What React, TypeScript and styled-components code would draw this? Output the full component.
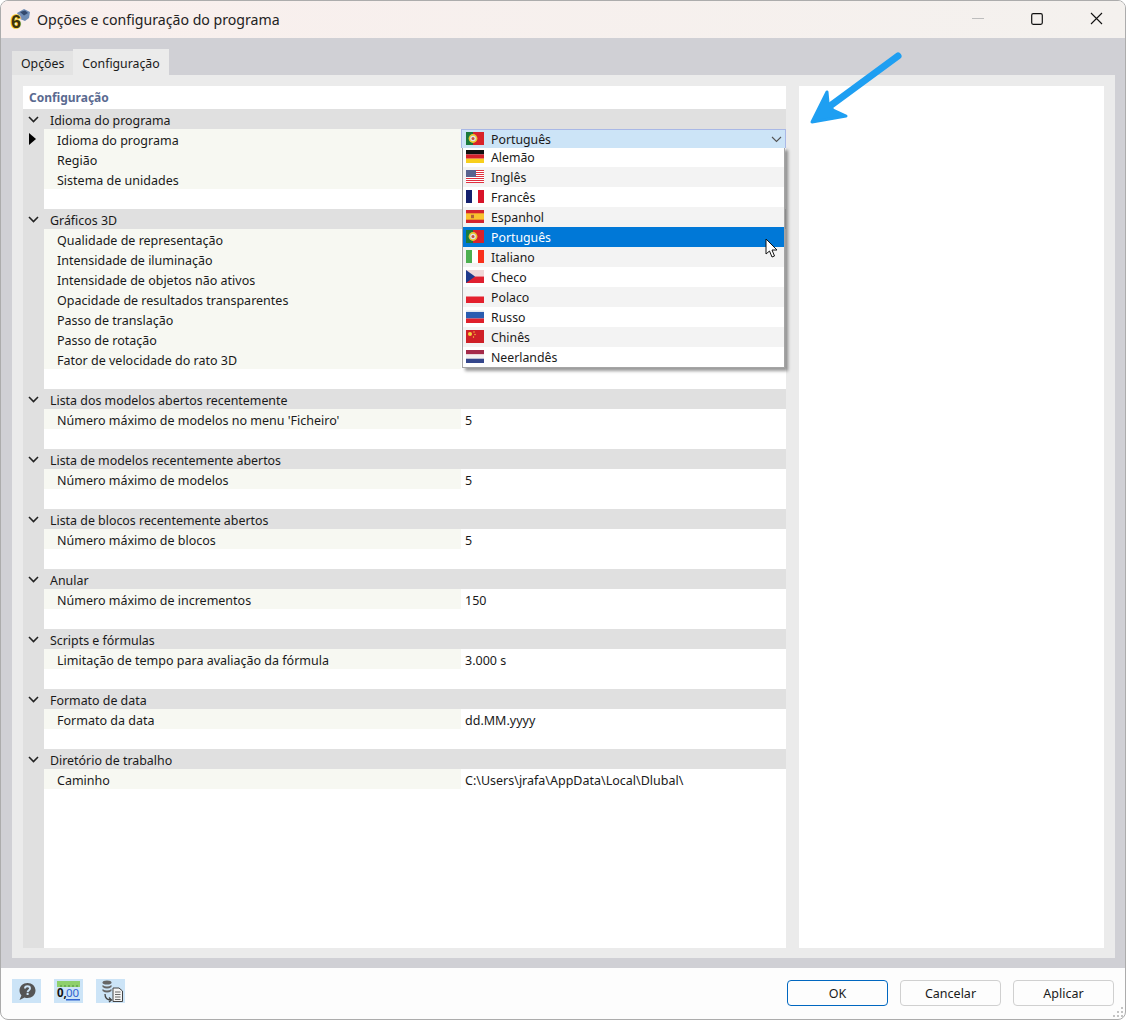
import styled, { createGlobalStyle } from "styled-components";
import { ReactNode } from "react";

const GlobalStyle = createGlobalStyle`
  html, body {
    margin: 0;
    padding: 0;
    background: #ffffff;
  }
  body {
    font-family: "Noto Sans", "Open Sans", sans-serif;
    font-size: 12px;
    color: #1a1a1a;
  }
  * {
    box-sizing: border-box;
  }
`;

const Screen = styled.div`
  width: 1127px;
  height: 1020px;
  position: relative;
  overflow: hidden;
`;

const Window = styled.div`
  width: 1126px;
  height: 1020px;
  border: 1px solid #acacac;
  border-radius: 8px;
  overflow: hidden;
  display: flex;
  flex-direction: column;
  background: #fdfdfd;
`;

const TitleBar = styled.div`
  height: 37px;
  flex-shrink: 0;
  display: flex;
  align-items: center;
  padding-left: 8px;
  background: linear-gradient(to right, #f9efed, #f4f1ee);
`;

const TitleText = styled.span`
  font-size: 14.15px;
  margin-left: 6px;
  color: #222;
`;

const WindowControls = styled.div`
  margin-left: auto;
  display: flex;
  align-items: center;
  gap: 47px;
  padding-right: 22px;
  padding-bottom: 2px;
`;

const Body = styled.div`
  flex: 1;
  min-height: 0;
  background: #d0d0d5;
  padding: 11px 10px 10px 11px;
  display: flex;
  flex-direction: column;
`;

const Tabs = styled.div`
  height: 26px;
  display: flex;
  align-items: flex-end;
  flex-shrink: 0;
`;

const Tab = styled.div<{ $active?: boolean }>`
  height: ${({ $active }) => ($active ? "26px" : "24px")};
  padding: ${({ $active }) => ($active ? "3px 9px 0" : "1px 9px 0")};
  display: flex;
  align-items: center;
  font-size: 12.3px;
  background: ${({ $active }) => ($active ? "#ebebeb" : "#e3e3e3")};
`;

const Panel = styled.div`
  flex: 1;
  min-height: 0;
  background: #ebebeb;
  padding: 11px 11px 10px;
  display: grid;
  grid-template-columns: 763px 305px;
  column-gap: 13px;
`;

const TreePane = styled.div`
  background: #fff;
  display: flex;
  flex-direction: column;
  position: relative;
`;

const PaneTitle = styled.div`
  height: 23px;
  padding-left: 6px;
  display: flex;
  align-items: center;
  font-weight: 700;
  font-size: 12px;
  color: #5a6a90;
`;

const Tree = styled.div`
  flex: 1;
  background: linear-gradient(to right, #e0e0e0 21px, #fff 21px);
`;

const GroupRow = styled.div`
  height: 20px;
  display: flex;
  align-items: center;
  background: #e0e0e0;
  font-size: 12.4px;
  padding-left: 5px;
`;

const GroupLabel = styled.span`
  margin-left: 11px;
  padding-top: 2px;
`;

const Row = styled.div`
  height: 20px;
  margin-left: 21px;
  display: grid;
  grid-template-columns: 417px 1fr;
  column-gap: 1px;
  position: relative;
`;

const RowLabel = styled.div`
  background: #f7f8f2;
  padding: 2px 0 0 13px;
  display: flex;
  align-items: center;
  font-size: 12.5px;
`;

const RowValue = styled.div`
  padding: 2px 0 0 3px;
  display: flex;
  align-items: center;
  font-size: 12.5px;
`;

const Spacer = styled.div`
  height: 20px;
`;

const RowMarker = styled.svg`
  position: absolute;
  left: -15px;
  top: 4px;
`;

const Combo = styled.div`
  position: absolute;
  left: 417px;
  top: 0;
  width: 325px;
  height: 19px;
  background: #cce4f7;
  border: 1px solid #a9b8e6;
  border-bottom: none;
  display: flex;
  align-items: center;
  padding-left: 4px;
  font-size: 12.3px;
  z-index: 3;
`;

const ComboChevron = styled.svg`
  margin-left: auto;
  margin-right: 3px;
`;

const FlagIcon = styled.svg`
  flex-shrink: 0;
  margin-bottom: 1px;
`;

const FlagLabel = styled.span`
  margin-left: 7px;
`;

const DropdownList = styled.div`
  position: absolute;
  left: 439px;
  top: 61px;
  width: 323px;
  border: 1px solid #a5a5a5;
  border-top: none;
  background: #fff;
  box-shadow: 3px 3px 3px rgba(0, 0, 0, 0.4);
  z-index: 2;
`;

const DropdownItem = styled.div<{ $selected: boolean; $odd: boolean }>`
  height: 20px;
  display: flex;
  align-items: center;
  padding-left: 3px;
  font-size: 12.3px;
  background: ${({ $selected, $odd }) =>
    $selected ? "#0078d7" : $odd ? "#f3f3f3" : "#fff"};
  color: ${({ $selected }) => ($selected ? "#fff" : "#1a1a1a")};
`;

const SidePane = styled.div`
  background: #fff;
`;

const Footer = styled.div`
  height: 51px;
  flex-shrink: 0;
  display: flex;
  padding: 11px 11px 0 11px;
`;

const ToolIcons = styled.div`
  display: flex;
  gap: 13px;
`;

const ToolIcon = styled.div`
  width: 29px;
  height: 24px;
  background: #cce4f7;
  display: flex;
  align-items: center;
  justify-content: center;
`;

const Buttons = styled.div`
  margin-left: auto;
  display: flex;
  gap: 12px;
  padding-top: 1px;
`;

const Button = styled.button<{ $primary?: boolean }>`
  width: 101px;
  height: 26px;
  background: #fdfdfd;
  border: 1px solid ${({ $primary }) => ($primary ? "#0067c0" : "#d0d0d0")};
  border-radius: 4px;
  font-family: inherit;
  font-size: 12.5px;
  color: #1a1a1a;
  padding: 0;
`;

const ResizeGrip = styled.svg`
  position: absolute;
  right: 3px;
  bottom: 2px;
`;

const Overlay = styled.svg`
  position: absolute;
  pointer-events: none;
  z-index: 5;
`;

const LogoIcon = styled.svg`
  flex-shrink: 0;
  overflow: visible;
  margin-bottom: 2px;
`;

type FlagCode =
  | "pt" | "de" | "en" | "fr" | "es" | "it" | "cz" | "pl" | "ru" | "cn" | "nl";

const flagArt: Record<FlagCode, ReactNode> = {
  pt: (
    <>
      <rect width="18" height="13" fill="#d8232a" />
      <rect width="7" height="13" fill="#1a7a3c" />
      <circle cx="7" cy="6.5" r="4.4" fill="#e8c832" />
      <circle cx="7" cy="6.5" r="2.8" fill="#dfe3ea" />
      <circle cx="7" cy="6.5" r="1.5" fill="#c8503c" />
    </>
  ),
  de: (
    <>
      <rect width="18" height="4.4" fill="#111" />
      <rect y="4.4" width="18" height="4.3" fill="#d5202b" />
      <rect y="8.7" width="18" height="4.3" fill="#f8cf1c" />
    </>
  ),
  en: (
    <>
      <rect width="18" height="13" fill="#fff" />
      {[0, 2, 4, 6, 8, 10, 12].map((y) => (
        <rect key={y} y={y} width="18" height="1" fill="#e0303f" />
      ))}
      <rect width="10" height="7" fill="#58628f" />
    </>
  ),
  fr: (
    <>
      <rect width="18" height="13" fill="#fff" />
      <rect width="6" height="13" fill="#14206e" />
      <rect x="12" width="6" height="13" fill="#d8142a" />
    </>
  ),
  es: (
    <>
      <rect width="18" height="13" fill="#d4232e" />
      <rect y="3.3" width="18" height="6.4" fill="#f9c22e" />
      <rect x="5" y="4.8" width="3" height="3.4" fill="#b0603c" />
    </>
  ),
  it: (
    <>
      <rect width="18" height="13" fill="#fff" />
      <rect width="6" height="13" fill="#4caf50" />
      <rect x="12" width="6" height="13" fill="#f9301c" />
    </>
  ),
  cz: (
    <>
      <rect width="18" height="6.5" fill="#f0d8d8" />
      <rect y="6.5" width="18" height="6.5" fill="#e02030" />
      <path d="M0 0 L9 6.5 L0 13 Z" fill="#1f3a8c" />
    </>
  ),
  pl: (
    <>
      <rect width="18" height="6.5" fill="#f4f4f4" />
      <rect y="6.5" width="18" height="6.5" fill="#e4202e" />
    </>
  ),
  ru: (
    <>
      <rect y="0.5" width="18" height="4" fill="#e4e8f0" />
      <rect y="2" width="18" height="6.5" fill="#2a5cb0" />
      <rect y="8.5" width="18" height="4.5" fill="#e0202c" />
    </>
  ),
  cn: (
    <>
      <rect width="18" height="13" fill="#cf1f27" />
      <circle cx="4" cy="4" r="2" fill="#f5d33c" />
      <circle cx="8" cy="2" r="0.7" fill="#f5d33c" />
      <circle cx="9" cy="4.5" r="0.7" fill="#f5d33c" />
      <circle cx="7.5" cy="7" r="0.7" fill="#f5d33c" />
    </>
  ),
  nl: (
    <>
      <rect width="18" height="4.4" fill="#a52a4a" />
      <rect y="4.4" width="18" height="4.3" fill="#f4f0f0" />
      <rect y="8.7" width="18" height="4.3" fill="#35478c" />
    </>
  ),
};

const Flag = ({ code }: { code: FlagCode }) => (
  <FlagIcon width="18" height="13" viewBox="0 0 18 13">
    {flagArt[code]}
  </FlagIcon>
);

const languages: { code: FlagCode; name: string }[] = [
  { code: "de", name: "Alemão" },
  { code: "en", name: "Inglês" },
  { code: "fr", name: "Francês" },
  { code: "es", name: "Espanhol" },
  { code: "pt", name: "Português" },
  { code: "it", name: "Italiano" },
  { code: "cz", name: "Checo" },
  { code: "pl", name: "Polaco" },
  { code: "ru", name: "Russo" },
  { code: "cn", name: "Chinês" },
  { code: "nl", name: "Neerlandês" },
];

const sections: { title: string; rows: [string, string?][] }[] = [
  {
    title: "Idioma do programa",
    rows: [["Idioma do programa"], ["Região"], ["Sistema de unidades"]],
  },
  {
    title: "Gráficos 3D",
    rows: [
      ["Qualidade de representação"],
      ["Intensidade de iluminação"],
      ["Intensidade de objetos não ativos"],
      ["Opacidade de resultados transparentes"],
      ["Passo de translação"],
      ["Passo de rotação"],
      ["Fator de velocidade do rato 3D"],
    ],
  },
  {
    title: "Lista dos modelos abertos recentemente",
    rows: [["Número máximo de modelos no menu 'Ficheiro'", "5"]],
  },
  {
    title: "Lista de modelos recentemente abertos",
    rows: [["Número máximo de modelos", "5"]],
  },
  {
    title: "Lista de blocos recentemente abertos",
    rows: [["Número máximo de blocos", "5"]],
  },
  { title: "Anular", rows: [["Número máximo de incrementos", "150"]] },
  {
    title: "Scripts e fórmulas",
    rows: [["Limitação de tempo para avaliação da fórmula", "3.000 s"]],
  },
  { title: "Formato de data", rows: [["Formato da data", "dd.MM.yyyy"]] },
  {
    title: "Diretório de trabalho",
    rows: [["Caminho", "C:\\Users\\jrafa\\AppData\\Local\\Dlubal\\"]],
  },
];

const Chevron = () => (
  <svg width="11" height="7" viewBox="0 0 11 7">
    <path d="M1 1 L5.5 5.5 L10 1" fill="none" stroke="#222" strokeWidth="1.6" />
  </svg>
);

const Logo = () => (
  <LogoIcon width="22" height="22" viewBox="0 0 22 22">
    <path d="M8 5 L15 1 L21 4 L20 10 L16 13 L11 11 Z" fill="#6f8db5" />
    <path d="M11 4 L16 2.5 L19 5 L15 7.5 Z" fill="#34496e" />
    <text
      x="2"
      y="19.5"
      fontSize="18"
      fontWeight="700"
      fill="#3a3210"
      stroke="#f2cc2a"
      strokeWidth="1.6"
      paintOrder="stroke"
      fontFamily="Liberation Sans, sans-serif"
    >
      6
    </text>
  </LogoIcon>
);

export default function App() {
  return (
    <Screen>
      <GlobalStyle />
      <Window>
        <TitleBar>
          <Logo />
          <TitleText>Opções e configuração do programa</TitleText>
          <WindowControls>
            <svg width="12" height="2" viewBox="0 0 12 2">
              <rect width="12" height="1" fill="#bdbdbd" />
            </svg>
            <svg width="12" height="12" viewBox="0 0 12 12">
              <rect x="0.7" y="0.7" width="10.6" height="10.6" rx="1.5" fill="none" stroke="#111" strokeWidth="1.2" />
            </svg>
            <svg width="13" height="13" viewBox="0 0 13 13">
              <path d="M1 1 L12 12 M12 1 L1 12" stroke="#111" strokeWidth="1.1" />
            </svg>
          </WindowControls>
        </TitleBar>

        <Body>
          <Tabs>
            <Tab>Opções</Tab>
            <Tab $active>Configuração</Tab>
          </Tabs>
          <Panel>
            <TreePane>
              <PaneTitle>Configuração</PaneTitle>
              <Tree>
                {sections.map((section, sectionIndex) => (
                  <div key={section.title}>
                    <GroupRow>
                      <Chevron />
                      <GroupLabel>{section.title}</GroupLabel>
                    </GroupRow>
                    {section.rows.map(([label, value], rowIndex) => (
                      <Row key={label}>
                        {sectionIndex === 0 && rowIndex === 0 && (
                          <>
                            <RowMarker width="8" height="12" viewBox="0 0 8 12">
                              <path d="M0 0 L7 6 L0 12 Z" fill="#000" />
                            </RowMarker>
                            <Combo>
                              <Flag code="pt" />
                              <FlagLabel>Português</FlagLabel>
                              <ComboChevron width="11" height="7" viewBox="0 0 11 7">
                                <path d="M1 1 L5.5 5.5 L10 1" fill="none" stroke="#555" strokeWidth="1.1" />
                              </ComboChevron>
                            </Combo>
                          </>
                        )}
                        <RowLabel>{label}</RowLabel>
                        <RowValue>{value}</RowValue>
                      </Row>
                    ))}
                    <Spacer />
                  </div>
                ))}
              </Tree>
              <DropdownList>
                {languages.map((lang, index) => (
                  <DropdownItem
                    key={lang.code}
                    $selected={lang.code === "pt"}
                    $odd={index % 2 === 1}
                  >
                    <Flag code={lang.code} />
                    <FlagLabel>{lang.name}</FlagLabel>
                  </DropdownItem>
                ))}
              </DropdownList>
            </TreePane>
            <SidePane />
          </Panel>
        </Body>

        <Footer>
          <ToolIcons>
            <ToolIcon>
              <svg width="22" height="22" viewBox="0 0 22 22">
                <path d="M11.5 3 C16 3 19.5 6 19.5 10.5 C19.5 15 16 18 11.5 18 C10.4 18 9.5 17.8 8.6 17.4 L3.5 20 L5.4 15.4 C4.2 14 3.5 12.4 3.5 10.5 C3.5 6 7 3 11.5 3 Z" fill="#555" />
                <path d="M9 8.5 C9 7 10.2 6.2 11.5 6.2 C13 6.2 14 7.1 14 8.4 C14 10.2 11.6 10.2 11.6 12.2" fill="none" stroke="#cce4f7" strokeWidth="1.9" />
                <rect x="10.6" y="13" width="2" height="2" fill="#cce4f7" />
              </svg>
            </ToolIcon>
            <ToolIcon>
              <svg width="26" height="22" viewBox="0 0 26 22">
                <rect x="1" y="1" width="23" height="6" fill="#8ed06c" />
                <path d="M5 5 V7 M9 5 V7 M13 5 V7 M17 5 V7 M21 5 V7" stroke="#4d8c3a" strokeWidth="1" />
                <text x="1" y="17" fontSize="11.5" fontWeight="700" fill="#111" fontFamily="Noto Sans, sans-serif">0,</text>
                <text x="10" y="17" fontSize="11.5" fill="#2f63d0" fontFamily="Noto Sans, sans-serif">00</text>
                <rect x="10" y="19" width="14" height="1.5" fill="#2f63d0" />
              </svg>
            </ToolIcon>
            <ToolIcon>
              <svg width="26" height="24" viewBox="0 0 26 24">
                <ellipse cx="9" cy="3.5" rx="4.5" ry="2" fill="#666" />
                <path d="M4.5 6 Q9 9 13.5 6 V8 Q9 11 4.5 8 Z M4.5 10 Q9 13 13.5 10 V12 Q9 15 4.5 12 Z" fill="#666" />
                <path d="M7 15 Q7 21 13 21 M11 18.5 L13.5 21 L11 23" fill="none" stroke="#444" strokeWidth="1.3" />
                <path d="M15 9 H21 L24.5 12 V22.5 H15 Z" fill="#f4f4f4" stroke="#444" strokeWidth="1" />
                <path d="M17 13 H22.5 M17 15.5 H22.5 M17 18 H22.5 M17 20.5 H22.5" stroke="#666" strokeWidth="1" />
              </svg>
            </ToolIcon>
          </ToolIcons>
          <Buttons>
            <Button $primary>OK</Button>
            <Button>Cancelar</Button>
            <Button>Aplicar</Button>
          </Buttons>
        </Footer>
      </Window>

      <ResizeGrip width="11" height="11" viewBox="0 0 11 11">
        <path d="M8 0 h2 v2 h-2 Z M4 4 h2 v2 h-2 Z M8 4 h2 v2 h-2 Z M0 8 h2 v2 h-2 Z M4 8 h2 v2 h-2 Z M8 8 h2 v2 h-2 Z" fill="#c4c4c4" />
      </ResizeGrip>

      {/* annotation arrow on top of the dialog */}
      <Overlay width="110" height="90" viewBox="0 0 110 90" style={{ left: 800, top: 45 }}>
        <path
          d="M98 11 L30 61"
          stroke="#1e9ff2"
          strokeWidth="7"
          strokeLinecap="round"
          fill="none"
        />
        <path
          d="M27 47 L12 77 L46 71 L33 65 L28 58 Z"
          fill="#1e9ff2"
          stroke="#1e9ff2"
          strokeWidth="3"
          strokeLinejoin="round"
        />
      </Overlay>

      {/* mouse pointer */}
      <Overlay width="16" height="22" viewBox="0 0 16 22" style={{ left: 765, top: 238 }}>
        <path
          d="M1 1 L1 16 L4.5 13 L7 19 L9.5 18 L7 12 L12 12 Z"
          fill="#fff"
          stroke="#111"
          strokeWidth="1"
        />
      </Overlay>
    </Screen>
  );
}
